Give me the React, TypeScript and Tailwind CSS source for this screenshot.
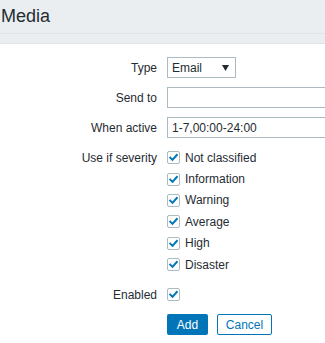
import React from 'react';

const font = { fontFamily: '"Liberation Sans", Arial, sans-serif' };

function Check() {
  return (
    <span className="flex h-[13px] w-[13px] shrink-0 items-center justify-center rounded-[2px] border border-[#acbbc2] bg-white">
      <svg width="9" height="9" viewBox="0 0 9 9" fill="none">
        <path d="M1.2 4.6 L3.5 6.8 L7.8 2" stroke="#0275b8" strokeWidth="2" strokeLinecap="square" />
      </svg>
    </span>
  );
}

function Label({ children }: { children: React.ReactNode }) {
  return <div className="flex h-[21px] items-center justify-end text-[12px] text-[#1f2c33]">{children}</div>;
}

const severities = ['Not classified', 'Information', 'Warning', 'Average', 'High', 'Disaster'];

export default function App() {
  return (
    <div className="h-[343px] w-[325px] overflow-hidden bg-white" style={font}>
      <div className="h-[34px] border-b border-[#dfe4e7] bg-[#ebeef0] pl-[1px] pt-[5px] text-[18px] leading-[22px] text-[#1f2c33]">
        Media
      </div>
      <div className="h-[10px] border-b border-[#dfe4e7] bg-[#ebeef0]" />

      <div className="grid grid-cols-[157px_1fr] gap-x-[10px] gap-y-[9px] pt-[13px]">
        <Label>Type</Label>
        <div className="flex h-[21px] w-[69px] items-center justify-between border border-[#acbbc2] pl-[4px] pr-[6px] text-[12px] text-[#1f2c33]">
          <span>Email</span>
          <svg width="7" height="6" viewBox="0 0 7 6">
            <path d="M0 0 H7 L3.5 6 Z" fill="#1f2c33" />
          </svg>
        </div>

        <Label>Send to</Label>
        <div className="h-[21px] w-[300px] border border-[#acbbc2]" />

        <Label>When active</Label>
        <div className="flex h-[21px] w-[300px] items-center border border-[#acbbc2] px-[4px] text-[12px] text-[#1f2c33]">
          1-7,00:00-24:00
        </div>

        <div className="flex h-[21.4px] items-center justify-end text-[12px] text-[#1f2c33]">Use if severity</div>
        <div className="flex flex-col">
          {severities.map(s => (
            <div key={s} className="flex h-[21.4px] items-center gap-[5px] text-[12px] text-[#1f2c33]">
              <Check />
              <span>{s}</span>
            </div>
          ))}
        </div>

        <Label>Enabled</Label>
        <div className="flex h-[21px] items-center">
          <Check />
        </div>

        <div />
        <div className="flex gap-[9px]">
          <button className="h-[21px] w-[41px] rounded-[2px] bg-[#0275b8] text-[12px] text-white">Add</button>
          <button className="h-[21px] w-[55px] rounded-[2px] border border-[#0275b8] bg-white text-[12px] text-[#0275b8]">
            Cancel
          </button>
        </div>
      </div>
    </div>
  );
}
